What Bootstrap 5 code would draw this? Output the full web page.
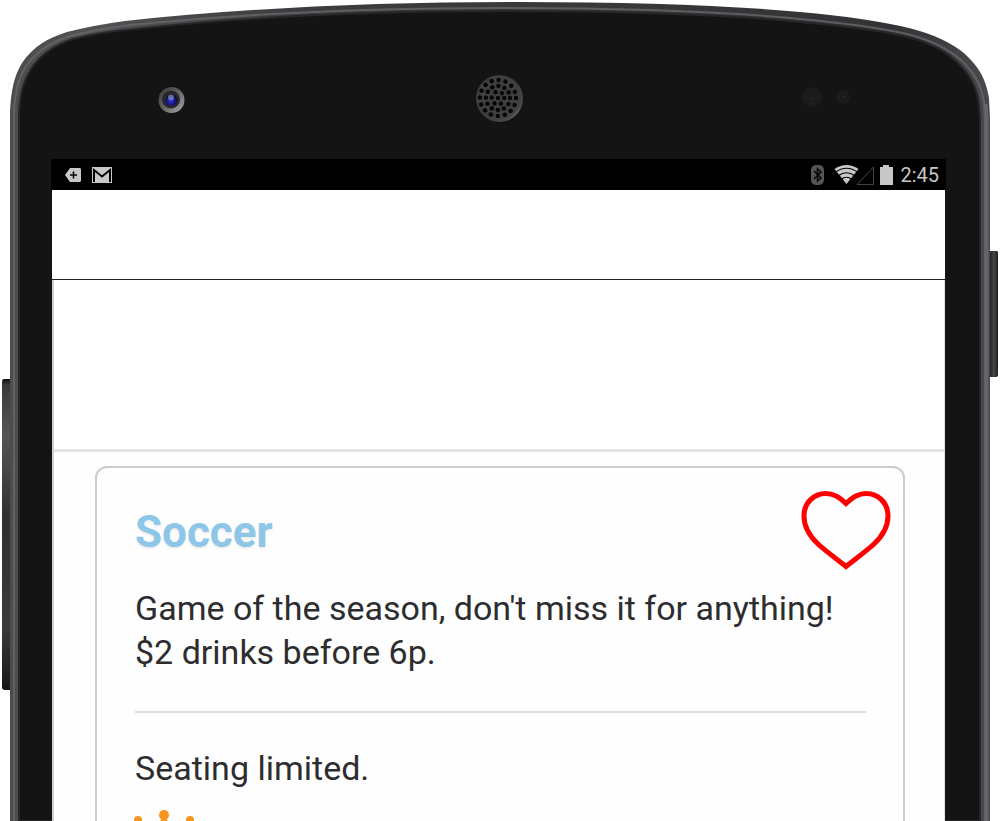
<!DOCTYPE html>
<html lang="en">
<head>
<meta charset="utf-8">
<meta name="viewport" content="width=device-width, initial-scale=1">
<title>Soccer</title>
<link href="https://cdn.jsdelivr.net/npm/bootstrap@5.3.0/dist/css/bootstrap.min.css" rel="stylesheet">
<style>
  body { font-family: Roboto, "Liberation Sans", sans-serif; color: #2d2d2f; background: #fff; }
  .phone { grid-template: 100% / 100%; }
  .phone > * { grid-area: 1 / 1; }
  .shell { min-width: 0; min-height: 0; }
  .device { padding: 160px 55px 0 52px; min-width: 0; }
  .status-bar { height: 30px; background: #000; color: #c6c6c6; padding: 0 6px 0 13px; font-size: 20px; line-height: 30px; outline: 1px solid #000; }
  .app-bar { height: 90px; border-bottom: 1px solid #222; background: #fff; }
  .app-main { border-left: 2px solid #d0d0d0; border-right: 1px solid #e4e4e4; background: #fefefe; }
  .banner { height: 172px; border-bottom: 3px solid #e4e4e4; background: #fff; }
  .event { margin: 14px 39px 0 41px; border: 2px solid #ccc; border-radius: 12px; background: #fefefe; color: inherit; }
  .event-top { padding: 22px 12px 16px 38px; }
  .event-title { padding-top: 4px; font-size: 44px; line-height: 52px; color: #8ec6e8; text-shadow: 0 2px 2px #eee; }
  .event-body { padding: 0 37px 40px 38px; font-size: 34px; line-height: 44px; }
  .rule { margin: 37px 0 33px; border-top: 2px solid #dcdcdc; opacity: 1; }
  .crown { margin: 19px 0 0 -2px; }
</style>
</head>
<body class="m-0">
<div class="phone d-grid vh-100 overflow-hidden">
  <svg class="shell w-100 h-100" viewBox="0 0 1000 821" preserveAspectRatio="none" aria-hidden="true">
    <defs>
      <linearGradient id="rim" x1="0" x2="1" y1="0" y2="0">
        <stop offset="0" stop-color="#4c4c4e"/><stop offset=".08" stop-color="#525254"/><stop offset=".3" stop-color="#3c3c3e"/><stop offset=".9" stop-color="#343436"/><stop offset="1" stop-color="#4a4a4e"/>
      </linearGradient>
      <linearGradient id="keyLeft" x1="0" x2="0" y1="0" y2="1">
        <stop offset="0" stop-color="#101010"/><stop offset=".02" stop-color="#3a3a3a"/><stop offset=".18" stop-color="#555"/><stop offset=".45" stop-color="#303030"/><stop offset=".8" stop-color="#3a3a3a"/><stop offset="1" stop-color="#161616"/>
      </linearGradient>
      <linearGradient id="keyRight" x1="0" x2="1" y1="0" y2="0">
        <stop offset="0" stop-color="#222"/><stop offset=".5" stop-color="#484848"/><stop offset="1" stop-color="#1c1c1c"/>
      </linearGradient>
      <linearGradient id="lens" x1="0" x2="1" y1="0" y2="1">
        <stop offset="0" stop-color="#343434"/><stop offset=".5" stop-color="#666"/><stop offset="1" stop-color="#aaa"/>
      </linearGradient>
      <linearGradient id="grille" x1="0" x2="1" y1="0" y2="1">
        <stop offset=".2" stop-color="#303030"/><stop offset=".8" stop-color="#484848"/><stop offset="1" stop-color="#999"/>
      </linearGradient>
      <radialGradient id="pupil" cx=".45" cy=".6">
        <stop offset="0" stop-color="#2a2ae0"/><stop offset=".6" stop-color="#1a1a8c"/><stop offset="1" stop-color="#10102c"/>
      </radialGradient>
    </defs>
    <path d="M10 379H4Q2 379 2 382V687Q2 690 5 690H10Z" fill="url(#keyLeft)"/>
    <path d="M990 251H997Q998 251 998 253V375Q998 377 996 377H990Z" fill="url(#keyRight)"/>
    <path d="M10 821V112C11 91 14 76 22 63C33 47 47 38 67 32Q95 25 125 21Q300 2 520 2Q690 2 800 12Q867 18 909 28Q945 37 965 54C980 68 986 80 989 98L990 118V821Z" fill="url(#rim)"/>
    <path d="M14 821V112C15 92 18 79 26 66C37 51 50 42 70 36Q98 29 130 25Q300 8 500 8Q690 8 800 19Q867 25 907 34Q942 43 961 60C975 73 981 85 984 102L985 120V821" fill="none" stroke="#68686c" stroke-width="2" opacity=".8"/>
    <path d="M987 821V118L986 104" fill="none" stroke="#77777c" stroke-width="3" opacity=".6"/>
    <path d="M19 821V114C20 92 24 80 31 69C41 54 54 45 73 39Q100 32 135 29Q300 11 500 11Q690 11 800 22Q867 28 904 36Q938 44 957 62C971 75 977 88 979 104L980 120V821Z" fill="#141414" stroke="#27272a" stroke-width="2"/>
    <circle cx="171.500" cy="100" r="13" fill="url(#lens)"/>
    <circle cx="171" cy="99.500" r="9" fill="#29292b"/>
    <circle cx="171.500" cy="100" r="6" fill="url(#pupil)"/>
    <circle cx="171" cy="97.500" r="3" fill="#a6b4d8" opacity=".55"/>
    <circle cx="499.500" cy="98.500" r="23.500" fill="url(#grille)"/>
    <circle cx="498.500" cy="97.500" r="22" fill="#404040"/>
    <g fill="none" stroke="#060606" stroke-width="4.400" stroke-linecap="round">
      <path d="M498 98h.1"/>
      <circle cx="498" cy="98" r="6.300" stroke-dasharray=".1 6.497"/>
      <circle cx="498" cy="98" r="12" stroke-dasharray=".1 6.183"/>
      <circle cx="498" cy="98" r="18" stroke-dasharray=".1 6.968"/>
    </g>
    <circle cx="812" cy="97" r="10" fill="#1b1b1b"/><circle cx="813" cy="99" r="1.500" fill="#33201b"/>
    <circle cx="843" cy="97" r="7" fill="#1b1b1b"/><circle cx="844" cy="97" r="1.500" fill="#33201b"/>
  </svg>

  <div class="device d-flex flex-column">
    <header class="status-bar d-flex align-items-center justify-content-between flex-shrink-0">
      <div class="d-flex align-items-center">
        <svg width="16" height="14" viewBox="0 0 16 14" aria-hidden="true"><path d="M5 0H15L16 1V13L15 14H5L0 7Z" fill="#c8c8c8"/><path d="M8.500 3.500V10.500M5 7H12" stroke="#000" stroke-width="1.500"/></svg>
        <svg class="ms-2" width="24" height="16" viewBox="0 0 24 16" aria-hidden="true"><rect x="3" width="20" height="16" fill="#c8c8c8"/><path d="M5 15V3L13 9.500L21 3V15" fill="none" stroke="#000" stroke-width="2"/></svg>
      </div>
      <div class="d-flex align-items-center">
        <svg width="13" height="20" viewBox="0 0 13 20" aria-hidden="true"><rect width="13" height="20" rx="5" fill="#555"/><path d="M3 6L10 13L6.500 16V4L10 7L3 14" fill="none" stroke="#050505" stroke-width="1.500"/></svg>
        <svg class="ms-2" width="64" height="22" viewBox="0 0 64 22" aria-hidden="true">
          <path d="M14.500 20L2.500 5Q14.500-3 26.500 5Z" fill="#c8c8c8"/>
          <path d="M3 8.500Q14.500 0 26 8.500M6 12Q14.500 5.500 23 12M9 15.500Q14.500 11 20 15.500" fill="none" stroke="#000" stroke-width="1.200"/>
          <path d="M25 20.500H41.500V3Z" fill="none" stroke="#444" stroke-width="1"/>
          <path d="M48 3H51V1H57V3H61V21H48Z" fill="#c8c8c8"/>
        </svg>
        <time class="ms-1" datetime="14:45">2:45</time>
      </div>
    </header>
    <div class="app-bar flex-shrink-0"></div>
    <main class="app-main flex-grow-1">
      <div class="banner"></div>
      <article class="card event">
        <div class="event-top d-flex align-items-center justify-content-between">
          <h1 class="event-title fw-bold mb-0">Soccer</h1>
          <button type="button" class="btn p-0 border-0 d-flex" aria-label="Favorite">
            <svg width="90" height="80" viewBox="0 0 90 80" aria-hidden="true"><path d="M45 13.500C38 6.500 32 3.500 25 3.500C12.500 3.500 3 13 3 26C3 38 9 46.500 17 54C24 60.500 35 68.500 45 76.500C55 68.500 66 60.500 73 54C81 46.500 87 38 87 26C87 13 77.500 3.500 65 3.500C58 3.500 52 6.500 45 13.500Z" fill="none" stroke="#f00" stroke-width="5"/></svg>
          </button>
        </div>
        <div class="event-body">
          <p class="mb-0">Game of the season, don't miss it for anything!<br>$2 drinks before 6p.</p>
          <hr class="rule">
          <p class="mb-0">Seating limited.</p>
          <svg class="crown d-block" width="62" height="42" viewBox="0 0 62 42" aria-hidden="true"><g fill="#f7941d"><circle cx="5" cy="11" r="4"/><circle cx="31" cy="6" r="5"/><circle cx="57" cy="11" r="4"/><path d="M5 12L20 24L29 9H33L42 24L57 12L52 40H10Z"/></g></svg>
        </div>
      </article>
    </main>
  </div>
</div>
<script src="https://cdn.jsdelivr.net/npm/bootstrap@5.3.0/dist/js/bootstrap.bundle.min.js"></script>
</body>
</html>
